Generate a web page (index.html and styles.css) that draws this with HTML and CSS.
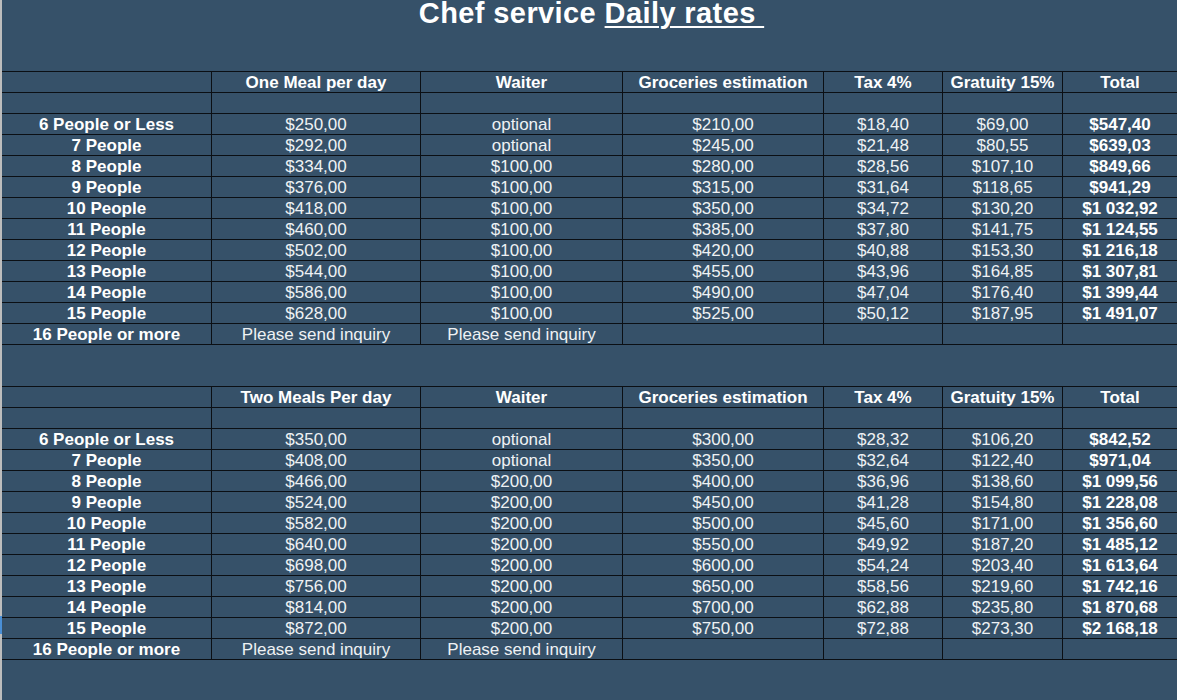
FILE: index.html
```html
<!DOCTYPE html>
<html>
<head>
<meta charset="utf-8">
<link rel="stylesheet" href="styles.css">
</head>
<body>
<div class="page">
  <div class="edge"></div>
  <div class="sheet">
    <div class="title-area">
      <h1 class="title">Chef service <span class="ul">Daily rates </span></h1>
    </div>
    <div class="grid">
      <div class="c"></div><div class="c h">One Meal per day</div><div class="c h">Waiter</div><div class="c h">Groceries estimation</div><div class="c h">Tax 4%</div><div class="c h">Gratuity 15%</div><div class="c h">Total</div>
      <div class="c"></div><div class="c"></div><div class="c"></div><div class="c"></div><div class="c"></div><div class="c"></div><div class="c"></div>
      <div class="c h">6 People or Less</div><div class="c">$250,00</div><div class="c">optional</div><div class="c">$210,00</div><div class="c">$18,40</div><div class="c">$69,00</div><div class="c h">$547,40</div>
      <div class="c h">7 People</div><div class="c">$292,00</div><div class="c">optional</div><div class="c">$245,00</div><div class="c">$21,48</div><div class="c">$80,55</div><div class="c h">$639,03</div>
      <div class="c h">8 People</div><div class="c">$334,00</div><div class="c">$100,00</div><div class="c">$280,00</div><div class="c">$28,56</div><div class="c">$107,10</div><div class="c h">$849,66</div>
      <div class="c h">9 People</div><div class="c">$376,00</div><div class="c">$100,00</div><div class="c">$315,00</div><div class="c">$31,64</div><div class="c">$118,65</div><div class="c h">$941,29</div>
      <div class="c h">10 People</div><div class="c">$418,00</div><div class="c">$100,00</div><div class="c">$350,00</div><div class="c">$34,72</div><div class="c">$130,20</div><div class="c h">$1 032,92</div>
      <div class="c h">11 People</div><div class="c">$460,00</div><div class="c">$100,00</div><div class="c">$385,00</div><div class="c">$37,80</div><div class="c">$141,75</div><div class="c h">$1 124,55</div>
      <div class="c h">12 People</div><div class="c">$502,00</div><div class="c">$100,00</div><div class="c">$420,00</div><div class="c">$40,88</div><div class="c">$153,30</div><div class="c h">$1 216,18</div>
      <div class="c h">13 People</div><div class="c">$544,00</div><div class="c">$100,00</div><div class="c">$455,00</div><div class="c">$43,96</div><div class="c">$164,85</div><div class="c h">$1 307,81</div>
      <div class="c h">14 People</div><div class="c">$586,00</div><div class="c">$100,00</div><div class="c">$490,00</div><div class="c">$47,04</div><div class="c">$176,40</div><div class="c h">$1 399,44</div>
      <div class="c h">15 People</div><div class="c">$628,00</div><div class="c">$100,00</div><div class="c">$525,00</div><div class="c">$50,12</div><div class="c">$187,95</div><div class="c h">$1 491,07</div>
      <div class="c h">16 People or more</div><div class="c">Please send inquiry</div><div class="c">Please send inquiry</div><div class="c"></div><div class="c"></div><div class="c"></div><div class="c"></div>
    </div>
    <div class="spacer"></div>
    <div class="grid">
      <div class="c"></div><div class="c h">Two Meals Per day</div><div class="c h">Waiter</div><div class="c h">Groceries estimation</div><div class="c h">Tax 4%</div><div class="c h">Gratuity 15%</div><div class="c h">Total</div>
      <div class="c"></div><div class="c"></div><div class="c"></div><div class="c"></div><div class="c"></div><div class="c"></div><div class="c"></div>
      <div class="c h">6 People or Less</div><div class="c">$350,00</div><div class="c">optional</div><div class="c">$300,00</div><div class="c">$28,32</div><div class="c">$106,20</div><div class="c h">$842,52</div>
      <div class="c h">7 People</div><div class="c">$408,00</div><div class="c">optional</div><div class="c">$350,00</div><div class="c">$32,64</div><div class="c">$122,40</div><div class="c h">$971,04</div>
      <div class="c h">8 People</div><div class="c">$466,00</div><div class="c">$200,00</div><div class="c">$400,00</div><div class="c">$36,96</div><div class="c">$138,60</div><div class="c h">$1 099,56</div>
      <div class="c h">9 People</div><div class="c">$524,00</div><div class="c">$200,00</div><div class="c">$450,00</div><div class="c">$41,28</div><div class="c">$154,80</div><div class="c h">$1 228,08</div>
      <div class="c h">10 People</div><div class="c">$582,00</div><div class="c">$200,00</div><div class="c">$500,00</div><div class="c">$45,60</div><div class="c">$171,00</div><div class="c h">$1 356,60</div>
      <div class="c h">11 People</div><div class="c">$640,00</div><div class="c">$200,00</div><div class="c">$550,00</div><div class="c">$49,92</div><div class="c">$187,20</div><div class="c h">$1 485,12</div>
      <div class="c h">12 People</div><div class="c">$698,00</div><div class="c">$200,00</div><div class="c">$600,00</div><div class="c">$54,24</div><div class="c">$203,40</div><div class="c h">$1 613,64</div>
      <div class="c h">13 People</div><div class="c">$756,00</div><div class="c">$200,00</div><div class="c">$650,00</div><div class="c">$58,56</div><div class="c">$219,60</div><div class="c h">$1 742,16</div>
      <div class="c h">14 People</div><div class="c">$814,00</div><div class="c">$200,00</div><div class="c">$700,00</div><div class="c">$62,88</div><div class="c">$235,80</div><div class="c h">$1 870,68</div>
      <div class="c h">15 People</div><div class="c">$872,00</div><div class="c">$200,00</div><div class="c">$750,00</div><div class="c">$72,88</div><div class="c">$273,30</div><div class="c h">$2 168,18</div>
      <div class="c h">16 People or more</div><div class="c">Please send inquiry</div><div class="c">Please send inquiry</div><div class="c"></div><div class="c"></div><div class="c"></div><div class="c"></div>
    </div>
  </div>
</div>
</body>
</html>
```
FILE: styles.css
```css
html, body {
  margin: 0;
  padding: 0;
  background: #365169;
}
body {
  font-family: "Liberation Sans", Arial, sans-serif;
  color: #ffffff;
  width: 1177px;
  height: 700px;
  overflow: hidden;
}
.page {
  display: flex;
  height: 700px;
}
.edge {
  width: 2px;
  flex: none;
  background: linear-gradient(to bottom, #bdbdbd 0, #bdbdbd 616px, #4a8fd6 616px, #4a8fd6 634px, #bdbdbd 634px);
}
.sheet {
  flex: 1;
  display: flex;
  flex-direction: column;
}
.title-area {
  height: 71px;
  flex: none;
}
.title {
  margin: 0;
  padding-left: 4px;
  text-align: center;
  font-size: 29px;
  line-height: 27px;
  letter-spacing: 0.4px;
  font-weight: bold;
  color: #ffffff;
}
.ul {
  white-space: pre;
  text-decoration: underline;
  text-decoration-thickness: 2px;
  text-underline-offset: 3px;
}
.grid {
  display: grid;
  grid-template-columns: 209px 208px 201px 200px 118px 119px 1fr;
  grid-auto-rows: 20px;
  gap: 1px;
  padding: 1px 0;
  background: #0b0f14;
  flex: none;
}
.c {
  background: #365169;
  text-align: center;
  font-size: 17px;
  line-height: 22px;
  white-space: nowrap;
  overflow: visible;
  color: #eef1f4;
}
.h {
  font-weight: bold;
  color: #ffffff;
}
.spacer {
  height: 41px;
  flex: none;
}
```
